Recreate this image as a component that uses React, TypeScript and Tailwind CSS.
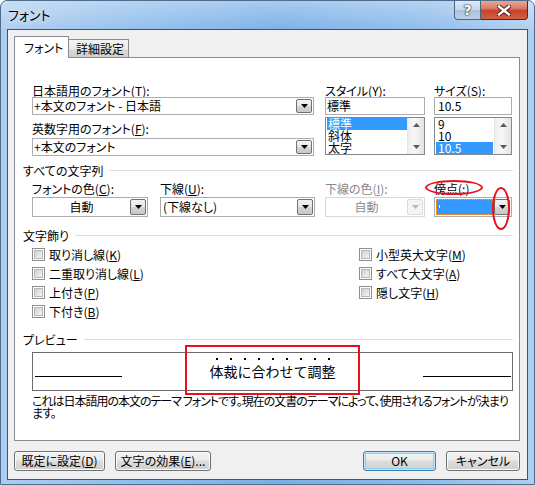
import React from 'react';

const U: React.FC<{ children: React.ReactNode }> = ({ children }) => (
  <span className="underline underline-offset-[1px]">{children}</span>
);

const Arrow: React.FC<{ color?: string }> = ({ color = '#000' }) => (
  <svg width="7" height="4" viewBox="0 0 7 4">
    <polygon points="0,0 7,0 3.5,4" fill={color} />
  </svg>
);

const SmallTri: React.FC<{ up?: boolean }> = ({ up }) => (
  <svg width="7" height="4" viewBox="0 0 7 4">
    <polygon points={up ? '0,4 7,4 3.5,0' : '0,0 7,0 3.5,4'} fill="#5a5a5a" />
  </svg>
);

const DropBtn: React.FC<{ disabled?: boolean }> = ({ disabled }) =>
  disabled ? (
    <div className="w-[16px] my-[1px] mr-[1px] flex items-center justify-center border border-[#dcdcdc] rounded-[2px] bg-[#f4f4f4]">
      <Arrow color="#b8b8b8" />
    </div>
  ) : (
    <div className="w-[16px] my-[1px] mr-[1px] flex items-center justify-center border border-[#707070] rounded-[2px] bg-[linear-gradient(#f3f3f3,#e6e6e6_50%,#d4d4d4_51%,#c8c8c8)]">
      <Arrow />
    </div>
  );

const Combo: React.FC<{
  children?: React.ReactNode;
  className: string;
  textClass: string;
  disabled?: boolean;
}> = ({ children, className, textClass, disabled }) => (
  <div className={`flex bg-white border ${disabled ? 'border-[#d9d9d9]' : 'border-[#abadb3]'} ${className}`}>
    <div className={`flex-1 flex items-center whitespace-nowrap ${textClass}`}>{children}</div>
    <DropBtn disabled={disabled} />
  </div>
);

const Label: React.FC<{ children: React.ReactNode; className?: string }> = ({ children, className = '' }) => (
  <div className={`h-[13px] leading-[13px] whitespace-nowrap ${className}`}>{children}</div>
);

const Section: React.FC<{ title: string; className: string }> = ({ title, className }) => (
  <div className={`flex items-center h-[13px] ${className}`}>
    <span className="leading-[13px] whitespace-nowrap">{title}</span>
    <div className="ml-[6px] flex-1 h-px bg-[#d5dfe5]" />
  </div>
);

const Scroll: React.FC = () => (
  <div className="w-[17px] flex flex-col items-center justify-between py-[5px] bg-[linear-gradient(to_right,#eeeeee,#f7f7f7_40%,#e3e3e3)] border-l border-[#e6e6e6]">
    <SmallTri up />
    <SmallTri />
  </div>
);

const ListBox: React.FC<{ items: string[]; selected: number; className: string; itemClass: string }> = ({
  items,
  selected,
  className,
  itemClass,
}) => (
  <div className={`flex h-[38px] border border-[#828790] bg-white ${className}`}>
    <div className="flex-1 overflow-hidden">
      {items.map((it, i) => (
        <div
          key={it}
          className={`h-[12px] leading-[12px] text-[12px] ${itemClass} ${i === selected ? 'bg-[#3399ff] text-white' : ''}`}
        >
          {it}
        </div>
      ))}
    </div>
    <Scroll />
  </div>
);

const Check: React.FC<{ children: React.ReactNode }> = ({ children }) => (
  <div className="flex items-center h-[19px]">
    <div className="w-[13px] h-[13px] border border-[#8f8f8f] bg-white p-[1px]">
      <div className="w-full h-full border border-[#b4b8bd] bg-[linear-gradient(135deg,#cdd0d4,#f4f4f4)]" />
    </div>
    <span className="ml-[4px] leading-[13px] whitespace-nowrap">{children}</span>
  </div>
);

const Btn: React.FC<{ children: React.ReactNode; className: string; primary?: boolean }> = ({
  children,
  className,
  primary,
}) => (
  <div
    className={`h-[20px] flex items-center justify-center rounded-[3px] border leading-[12px] whitespace-nowrap bg-[linear-gradient(#f2f2f2,#ebebeb_45%,#dddddd_50%,#cfcfcf)] ${
      primary
        ? 'border-[#3c7fb1] shadow-[inset_0_0_0_1px_#bfe6fb,inset_0_0_0_2px_#8fd0f2]'
        : 'border-[#707070] shadow-[inset_0_0_0_1px_#fbfbfb]'
    } ${className}`}
  >
    {children}
  </div>
);

const App: React.FC = () => {
  return (
    <div className="relative w-[535px] h-[485px] overflow-hidden rounded-t-[7px] border border-[#4d6c8e] bg-[linear-gradient(to_right,#aecdef,#93bfec_22%,#79aee6_52%,#8dbbea_80%,#b0cff0)] flex flex-col font-['Noto_Sans_CJK_JP',sans-serif] text-[12px] text-black [font-feature-settings:'palt']">
      {/* Title bar */}
      <div className="h-[28px] flex items-start bg-[linear-gradient(rgba(255,255,255,0.35),rgba(255,255,255,0.05))]">
        <div className="pl-[7px] pt-[5px] text-[13px] leading-[18px] [text-shadow:0_0_6px_#ffffff]">フォント</div>
        <div className="ml-auto mr-[6px] flex">
          <div className="w-[27px] h-[19px] flex items-center justify-center rounded-bl-[4px] border border-t-0 border-[#4d6780] bg-[linear-gradient(#dfe9f5,#c5d6ea_50%,#a9c1dc_51%,#bcd1e7)]">
            <span className="text-white font-bold text-[14px] leading-[14px] font-['DejaVu_Sans',sans-serif] [text-shadow:0_0_1px_#26384f,0_0_1px_#26384f,0_0_2px_#26384f]">
              ?
            </span>
          </div>
          <div className="w-[47px] h-[19px] flex items-center justify-center rounded-br-[4px] border border-t-0 border-l-0 border-[#5b2320] bg-[linear-gradient(#e8a797,#d9765f_45%,#c7422b_50%,#d35f42)]">
            <svg width="14" height="11" viewBox="0 0 14 11">
              <path d="M2 1.5 L12 9.5 M12 1.5 L2 9.5" stroke="#3a1410" strokeWidth="4.2" strokeLinecap="square" />
              <path d="M2 1.5 L12 9.5 M12 1.5 L2 9.5" stroke="#ffffff" strokeWidth="2.4" strokeLinecap="square" />
            </svg>
          </div>
        </div>
      </div>

      {/* Client area */}
      <div className="ml-[6px] w-[521px] h-[451px] border border-[#3f5468] bg-[#f0f0f0] flex flex-col pl-[6px] pr-[7px] pt-[6px]">
        {/* Tabs */}
        <div className="relative z-10 h-[21px] flex items-end">
          <div className="w-[55px] h-[22px] -mb-px bg-white border border-b-0 border-[#898c95] flex items-center pl-[9px] leading-[12px]">
            フォント
          </div>
          <div className="-ml-px w-[61px] h-[18px] border border-b-0 border-[#898c95] bg-[linear-gradient(#f3f3f3,#ebebeb_50%,#dddddd_51%,#cfcfcf)] flex items-center pl-[7px] leading-[12px]">
            詳細設定
          </div>
        </div>

        {/* Panel */}
        <div className="h-[384px] border border-[#898c95] bg-white pl-[8px] pr-[6px] pt-[26px] flex flex-col">
          {/* Fonts / style / size */}
          <div className="ml-[9px] flex">
            <div className="w-[282px] flex flex-col">
              <Label>
                日本語用のフォント(<U>T</U>):
              </Label>
              <Combo className="h-[18px]" textClass="pl-[1px]">
                +本文のフォント - 日本語
              </Combo>
              <Label className="mt-[7px]">
                英数字用のフォント(<U>F</U>):
              </Label>
              <Combo className="h-[18px] mt-[3px]" textClass="pl-[1px]">
                +本文のフォント
              </Combo>
            </div>
            <div className="ml-[11px] w-[100px] flex flex-col">
              <Label>
                スタイル(<U>Y</U>):
              </Label>
              <div className="h-[18px] border border-[#abadb3] bg-white flex items-center pl-[1px]">標準</div>
              <ListBox className="mt-[2px]" itemClass="pl-[1px] ml-px" items={['標準', '斜体', '太字']} selected={0} />
            </div>
            <div className="ml-[9px] w-[78px] flex flex-col">
              <Label>
                サイズ(<U>S</U>):
              </Label>
              <div className="h-[18px] border border-[#abadb3] bg-white flex items-center pl-[3px]">10.5</div>
              <ListBox className="mt-[2px]" itemClass="pl-[2px] mx-px" items={['9', '10', '10.5']} selected={2} />
            </div>
          </div>

          <Section title="すべての文字列" className="mt-[8px]" />

          {/* Colour / underline row */}
          <div className="ml-[9px] mt-[5px] flex">
            <div className="w-[116px] flex flex-col">
              <Label>
                フォントの色(<U>C</U>):
              </Label>
              <Combo className="h-[20px] mt-[2px]" textClass="justify-center">
                自動
              </Combo>
            </div>
            <div className="ml-[12px] w-[155px] flex flex-col">
              <Label>
                下線(<U>U</U>):
              </Label>
              <Combo className="h-[20px] mt-[2px]" textClass="pl-[2px]">
                (下線なし)
              </Combo>
            </div>
            <div className="ml-[10px] w-[100px] flex flex-col">
              <Label className="text-[#8a8a8a]">
                下線の色(<U>I</U>):
              </Label>
              <Combo className="h-[20px] mt-[2px]" textClass="justify-center text-[#8d8d8d]" disabled>
                自動
              </Combo>
            </div>
            <div className="ml-[9px] w-[78px] flex flex-col">
              <Label>傍点(:)</Label>
              <Combo className="h-[20px] mt-[2px]" textClass="p-[1px] items-stretch">
                <div className="flex-1 bg-[#3399ff] border border-dotted border-[#ff9d42] relative">
                  <span className="absolute left-[2px] top-[5px] w-px h-[3px] bg-white" />
                </div>
              </Combo>
            </div>
          </div>

          <Section title="文字飾り" className="mt-[12px]" />

          {/* Effects */}
          <div className="ml-[9px] mt-[3px] flex">
            <div className="w-[327px] flex flex-col">
              <Check>
                取り消し線(<U>K</U>)
              </Check>
              <Check>
                二重取り消し線(<U>L</U>)
              </Check>
              <Check>
                上付き(<U>P</U>)
              </Check>
              <Check>
                下付き(<U>B</U>)
              </Check>
            </div>
            <div className="flex flex-col">
              <Check>
                小型英大文字(<U>M</U>)
              </Check>
              <Check>
                すべて大文字(<U>A</U>)
              </Check>
              <Check>
                隠し文字(<U>H</U>)
              </Check>
            </div>
          </div>

          <Section title="プレビュー" className="mt-[12px]" />

          {/* Preview */}
          <div className="ml-[9px] mt-[6px] h-[39px] border border-[#6d6d6d] bg-white grid grid-cols-[1fr_auto_1fr]">
            <div className="ml-[2px] mt-[23px] w-[87px] h-px bg-black" />
            <div className="mt-[11px] flex [font-feature-settings:normal] text-[14px] leading-[14px]">
              {'体裁に合わせて調整'.split('').map((ch, i) => (
                <span key={i} className="relative w-[14px] text-center">
                  <span className="absolute left-[6px] top-[-6px] w-[2px] h-[2px] bg-black" />
                  {ch}
                </span>
              ))}
            </div>
            <div className="justify-self-end mr-[1px] mt-[23px] w-[88px] h-px bg-black" />
          </div>

          <div className="ml-[9px] mt-[4px] leading-[12px] tracking-[-1px] whitespace-nowrap">
            これは日本語用の本文のテーマ フォントです。現在の文書のテーマによって、使用されるフォントが決まり
            <br />
            ます。
          </div>
        </div>

        {/* Buttons */}
        <div className="mt-[10px] flex">
          <Btn className="w-[91px]">
            既定に設定(<U>D</U>)
          </Btn>
          <Btn className="ml-[10px] w-[96px]">
            文字の効果(<U>E</U>)...
          </Btn>
          <Btn className="ml-auto w-[73px]" primary>
            OK
          </Btn>
          <Btn className="ml-[10px] w-[74px]">キャンセル</Btn>
        </div>
      </div>

      {/* Red annotations */}
      <div className="absolute left-[424px] top-[179px] w-[58px] h-[15px] rounded-[50%] border-2 border-[#e8101a] pointer-events-none" />
      <div className="absolute left-[491px] top-[186px] w-[18px] h-[43px] rounded-[50%] border-2 border-[#e8101a] pointer-events-none" />
      <div className="absolute left-[184px] top-[344px] w-[175px] h-[50px] border-2 border-[#e8101a] pointer-events-none" />
    </div>
  );
};

export default App;
